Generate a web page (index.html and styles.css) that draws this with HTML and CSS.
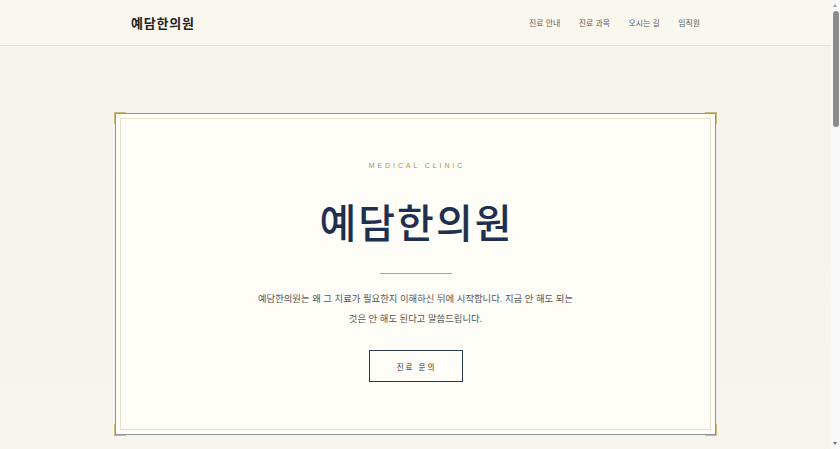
FILE: index.html
```html
<!DOCTYPE html>
<html lang="ko">
<head>
<meta charset="utf-8">
<title>예담한의원</title>
<link rel="stylesheet" href="styles.css">
</head>
<body>
<div class="page">
  <header class="site-header">
    <div class="container header-inner">
      <a class="logo" href="#">예담한의원</a>
      <nav class="nav">
        <a href="#">진료 안내</a>
        <a href="#">진료 과목</a>
        <a href="#">오시는 길</a>
        <a href="#">임직원</a>
      </nav>
    </div>
  </header>
  <main>
    <section class="hero">
      <div class="card">
        <span class="corner tl"></span>
        <span class="corner tr"></span>
        <span class="corner bl"></span>
        <span class="corner br"></span>
        <div class="card-inner">
          <p class="eyebrow">MEDICAL CLINIC</p>
          <h1 class="title">예담한의원</h1>
          <div class="divider"></div>
          <p class="lead">예담한의원는 왜 그 치료가 필요한지 이해하신 뒤에 시작합니다. 지금 안 해도 되는 것은 안 해도 된다고 말씀드립니다.</p>
          <a class="btn" href="#">진료 문의</a>
        </div>
      </div>
    </section>
    <section class="more">
      <div class="container">
        <h2 class="more-title">진료 안내</h2>
        <p class="more-text">진료 시간과 예약 방법을 안내해 드립니다.</p>
      </div>
    </section>
    <section class="more">
      <div class="container">
        <h2 class="more-title">진료 과목</h2>
        <p class="more-text">침, 뜸, 한약 등 다양한 진료를 제공합니다.</p>
      </div>
    </section>
    <section class="more">
      <div class="container">
        <h2 class="more-title">오시는 길</h2>
        <p class="more-text">찾아오시는 길을 안내해 드립니다.</p>
      </div>
    </section>
  </main>
</div>
<div class="scrollbar" aria-hidden="true">
  <span class="sb-arrow up"></span>
  <span class="sb-thumb"></span>
  <span class="sb-arrow down"></span>
</div>
</body>
</html>
```

FILE: styles.css
```css
* { box-sizing: border-box; }

body {
  margin: 0;
  background: #f7f4ec;
  font-family: "Noto Sans CJK KR", "Noto Sans", sans-serif;
  color: #333;
}

.page {
  margin-right: 9px;
}

a { text-decoration: none; color: inherit; }

.container {
  max-width: 601px;
  margin: 0 auto;
  padding: 0 16px;
}

.site-header {
  background: #faf7ef;
  border-bottom: 1px solid #ebe3c8;
  height: 46px;
}

.header-inner {
  height: 45px;
  display: flex;
  align-items: center;
  justify-content: space-between;
}

.logo {
  font-size: 13px;
  font-weight: 700;
  color: #222;
  letter-spacing: 0.8px;
}

.nav {
  display: flex;
  gap: 18.5px;
}

.nav a {
  font-size: 7.9px;
  color: #5c5c5c;
}

.hero {
  padding: 67px 0 80px;
  background: linear-gradient(#f6f3eb, #f8f5ee);
}

.card {
  position: relative;
  width: 601px;
  margin: 0 auto;
  border: 1px solid #8e929b;
  background: #fffdf7;
  padding: 4px;
}

.corner {
  position: absolute;
  width: 12px;
  height: 12px;
  border-color: #cdb979;
  border-style: solid;
  border-width: 0;
}
.corner.tl { top: -2px; left: -2px; border-top-width: 1.5px; border-left-width: 1.5px; }
.corner.tr { top: -2px; right: -2px; border-top-width: 1.5px; border-right-width: 1.5px; }
.corner.bl { bottom: -2px; left: -2px; border-bottom-width: 1.5px; border-left-width: 1.5px; }
.corner.br { bottom: -2px; right: -2px; border-bottom-width: 1.5px; border-right-width: 1.5px; }

.card-inner {
  border: 1px solid #e6e1cd;
  display: flex;
  flex-direction: column;
  align-items: center;
  text-align: center;
  padding: 42px 20px 47px;
}

.eyebrow {
  margin: 0;
  font-family: "Liberation Sans", sans-serif;
  font-size: 7px;
  line-height: 10px;
  letter-spacing: 2.9px;
  color: #a8904f;
  padding-left: 3px;
}

.title {
  margin: 26px 0 0;
  font-size: 40px;
  line-height: 48px;
  font-weight: 500;
  letter-spacing: 2px;
  padding-left: 2px;
  color: #1e2f4f;
}

.divider {
  width: 72px;
  height: 1px;
  background: #b9a86c;
  margin-top: 28px;
}

.lead {
  margin: 14px 0 0;
  max-width: 320px;
  font-size: 9.35px;
  line-height: 20px;
  color: #555;
  word-break: keep-all;
}

.btn {
  margin-top: 22px;
  width: 94px;
  height: 32px;
  border: 1px solid #2b3a5a;
  display: flex;
  align-items: center;
  justify-content: center;
  font-size: 7.5px;
  letter-spacing: 2px;
  padding-left: 2px;
  color: #333;
}

.more {
  padding: 160px 0 200px;
}

.more-title {
  margin: 0 0 12px;
  font-size: 20px;
  font-weight: 500;
  color: #1e2f4f;
  text-align: center;
}

.more-text {
  margin: 0;
  font-size: 10px;
  color: #555;
  text-align: center;
}

.scrollbar {
  position: fixed;
  top: 0;
  right: 0;
  width: 9px;
  height: 100vh;
  background: #f8f8f8;
}

.sb-thumb {
  position: absolute;
  top: 11px;
  left: 1.5px;
  width: 6px;
  height: 116px;
  border-radius: 3px;
  background: #8b8b8b;
}

.sb-arrow {
  position: absolute;
  left: 2px;
  width: 0;
  height: 0;
  border-left: 2.5px solid transparent;
  border-right: 2.5px solid transparent;
}
.sb-arrow.up { top: 4px; border-bottom: 3px solid #a0a0a0; }
.sb-arrow.down { bottom: 4px; border-top: 3px solid #707070; }
```
